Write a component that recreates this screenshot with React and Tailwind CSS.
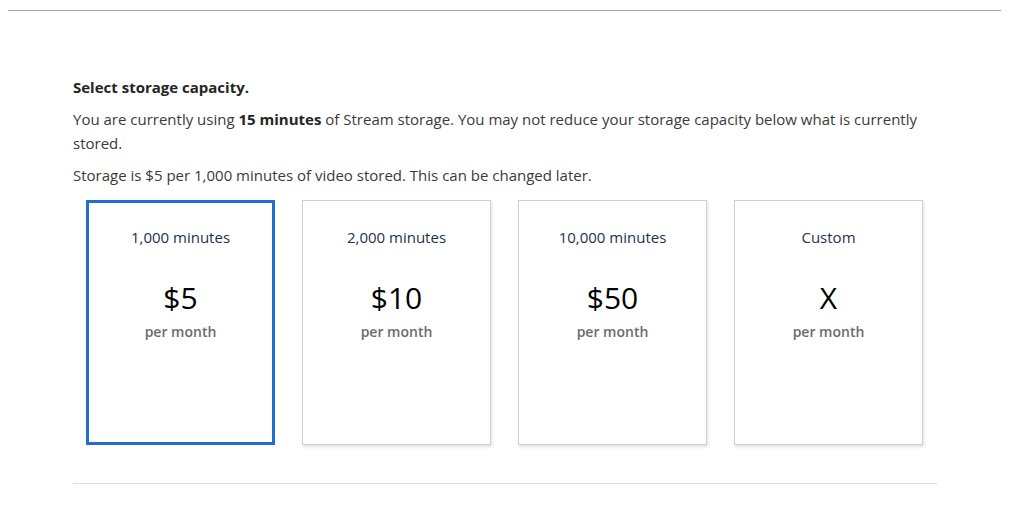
import React from 'react';

const plans = [
  { label: '1,000 minutes', price: '$5', selected: true },
  { label: '2,000 minutes', price: '$10' },
  { label: '10,000 minutes', price: '$50' },
  { label: 'Custom', price: 'X' },
];

const App = () => {
  return (
    <div className="min-h-screen bg-white text-[#323130]" style={{ fontFamily: '"Open Sans", "Noto Sans", sans-serif' }}>
      {/* Top rule */}
      <div className="px-2 pt-[10px]">
        <div className="h-px bg-[#a8a8a8]" />
      </div>

      {/* Content */}
      <div className="ml-[73px] w-[864px] pt-[66px]">
        <h2 className="text-[15px] font-bold leading-[20px] text-[#252423]">Select storage capacity.</h2>
        <p className="mt-[10px] text-[15px] leading-[24px] text-[#3b3a39]">
          You are currently using <b className="text-[#252423]">15 minutes</b> of Stream storage. You may not reduce your storage capacity below what is currently stored.
        </p>
        <p className="mt-[8px] text-[15px] leading-[24px] text-[#3b3a39]">
          Storage is $5 per 1,000 minutes of video stored. This can be changed later.
        </p>

        {/* Plan cards */}
        <div className="mt-[13px] flex gap-[27px] px-[13px]">
          {plans.map((plan) => (
            <button
              key={plan.label}
              className={`flex h-[245px] w-[189px] flex-col items-center bg-white pt-[24px] ${
                plan.selected
                  ? 'border-[3px] border-[#1f6fcf]'
                  : 'border border-[#cfcfcf] shadow-[1px_2px_3px_rgba(0,0,0,0.12)]'
              }`}
            >
              <span className={`text-[15px] leading-[20px] text-[#1b324d] ${plan.selected ? '' : 'mt-[2px]'}`}>{plan.label}</span>
              <span className="mt-[33px] text-[30px] leading-[36px] text-black">{plan.price}</span>
              <span className="mt-[7px] text-[14px] font-semibold leading-[18px] text-[#6b6b6b]">per month</span>
            </button>
          ))}
        </div>

        {/* Bottom rule */}
        <div className="mt-[38px] h-px bg-[#dcdcdc]" />
      </div>
    </div>
  );
};

export default App;
